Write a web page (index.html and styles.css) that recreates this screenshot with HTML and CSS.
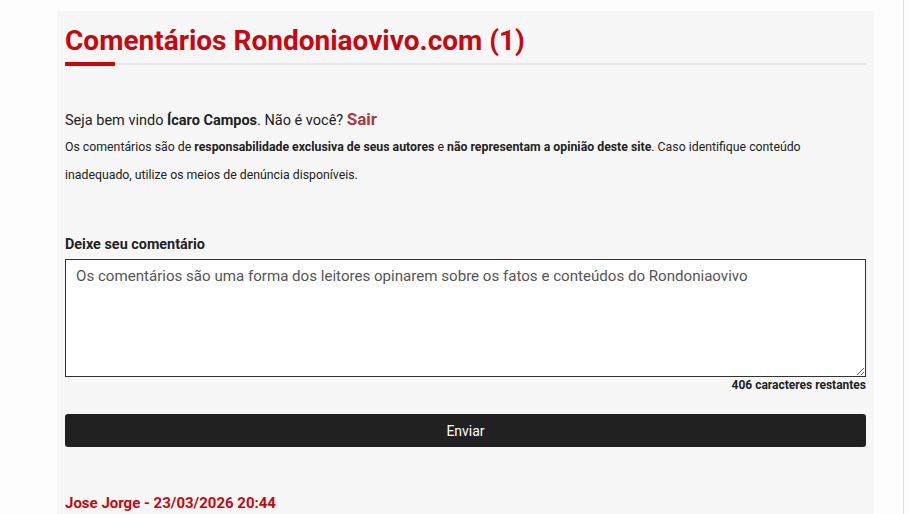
FILE: index.html
```html
<!DOCTYPE html>
<html lang="pt-BR">
<head>
  <meta charset="UTF-8">
  <title>Comentários Rondoniaovivo.com</title>
  <link rel="stylesheet" href="styles.css">
</head>
<body>
  <div class="frame">
    <section class="comments">
      <h2 class="title">Comentários Rondoniaovivo.com (1)</h2>
      <div class="title-rule"><span></span></div>

      <p class="welcome">Seja bem vindo <strong>Ícaro Campos</strong>. Não é você? <a href="#" class="logout">Sair</a></p>
      <p class="notice">Os comentários são de <strong>responsabilidade exclusiva de seus autores</strong> e <strong>não representam a opinião deste site</strong>. Caso identifique conteúdo inadequado, utilize os meios de denúncia disponíveis.</p>

      <form class="comment-form">
        <label for="msg">Deixe seu comentário</label>
        <textarea id="msg" placeholder="Os comentários são uma forma dos leitores opinarem sobre os fatos e conteúdos do Rondoniaovivo"></textarea>
        <div class="counter">406 caracteres restantes</div>
        <button type="button" class="send">Enviar</button>
      </form>

      <div class="comment">
        <div class="author">Jose Jorge - 23/03/2026 20:44</div>
      </div>
    </section>
  </div>
</body>
</html>
```

FILE: styles.css
```css
html, body { margin:0; padding:0; background:#fdfdfd; }
body { font-family:Roboto, "Liberation Sans", sans-serif; color:#222; height:514px; overflow:hidden; }
.frame { width:904px; height:514px; border-right:1px solid #dcdcdc; box-sizing:border-box; padding:11px 0 0 57px; }
.comments { width:817px; background:#f7f7f7; padding:10px 8px 0 8px; box-sizing:border-box; height:503px; }
.title { margin:0; font-size:28px; font-weight:700; color:#c8070f; line-height:40px; }
.title-rule { height:2px; background:#e8e8e8; margin-top:2px; position:relative; }
.title-rule span { position:absolute; left:0; top:-1px; width:50px; height:4px; background:#c8070f; }
.welcome { margin:44px 0 0; font-size:14.5px; line-height:20px; color:#222; }
.welcome strong { font-weight:700; }
.logout { color:#b0393b; font-weight:700; font-size:17px; text-decoration:none; }
.notice { margin:2px 0 0; font-size:12.3px; line-height:28px; color:#222; }
.notice strong { font-weight:700; }
.comment-form { margin-top:46px; display:flex; flex-direction:column; }
.comment-form label { font-size:14.4px; font-weight:700; color:#222; line-height:20px; }
.comment-form textarea { margin-top:4px; height:118px; box-sizing:border-box; border:1px solid #333; background:#fff; padding:6px 10px; font-family:Roboto, "Liberation Sans", sans-serif; font-size:15.1px; line-height:20px; color:#555; resize:vertical; }
.comment-form textarea::placeholder { color:#555; opacity:1; }
.counter { text-align:right; font-size:12px; font-weight:700; color:#222; line-height:16px; }
.send { margin-top:21px; height:33px; border:none; border-radius:3px; background:#212121; color:#fff; font-family:Roboto, "Liberation Sans", sans-serif; font-size:14px; cursor:pointer; }
.comment { margin-top:46px; }
.author { font-size:15px; font-weight:700; color:#c8070f; line-height:20px; }
```
